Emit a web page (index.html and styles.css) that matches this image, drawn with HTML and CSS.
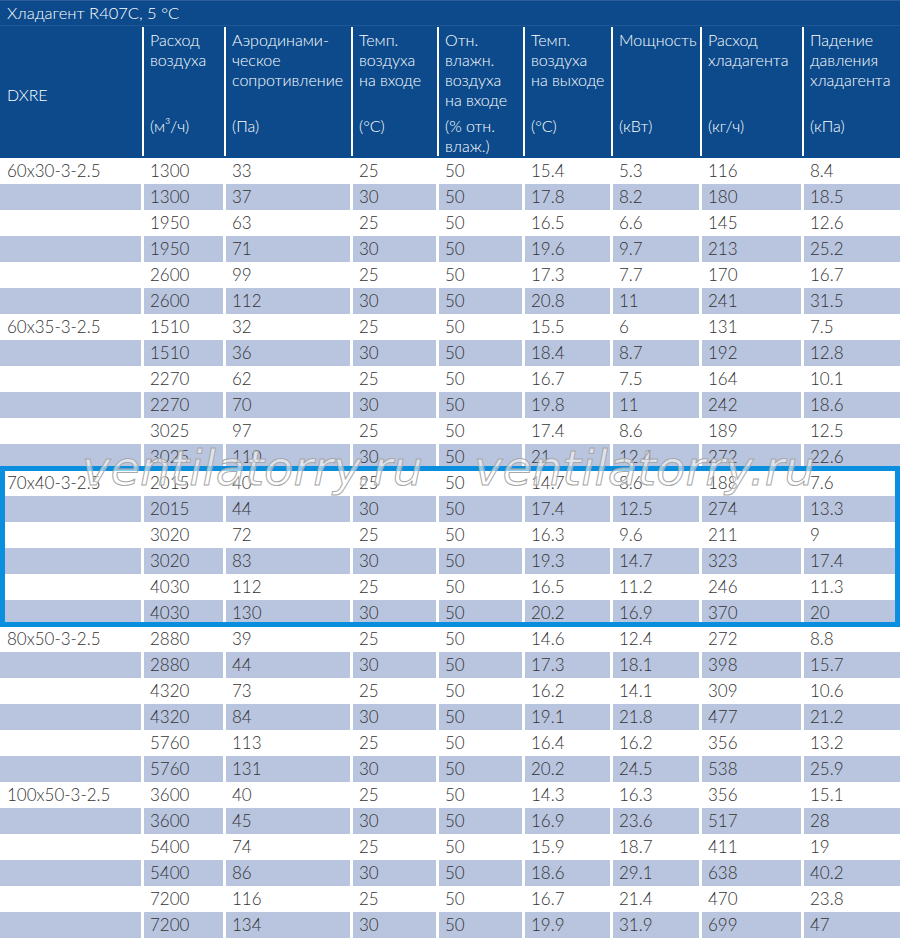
FILE: index.html
```html
<!DOCTYPE html>
<html lang="ru">
<head>
<meta charset="utf-8">
<title>DXRE R407C</title>
<link rel="stylesheet" href="styles.css">
</head>
<body>
<div class="sheet">
  <div class="title">Хладагент R407C, 5 °C</div>
  <div class="head">
    <div class="hc hc-first"><div class="model-label">DXRE</div></div>
    <div class="hc"><div class="name">Расход<br>воздуха</div><div class="unit">(м³/ч)</div></div>
    <div class="hc"><div class="name">Аэродинами-<br>ческое<br>сопротивление</div><div class="unit">(Па)</div></div>
    <div class="hc"><div class="name">Темп.<br>воздуха<br>на входе</div><div class="unit">(°C)</div></div>
    <div class="hc"><div class="name">Отн.<br>влажн.<br>воздуха<br>на входе</div><div class="unit">(% отн.<br>влаж.)</div></div>
    <div class="hc"><div class="name">Темп.<br>воздуха<br>на выходе</div><div class="unit">(°C)</div></div>
    <div class="hc"><div class="name">Мощность</div><div class="unit">(кВт)</div></div>
    <div class="hc"><div class="name">Расход<br>хладагента</div><div class="unit">(кг/ч)</div></div>
    <div class="hc"><div class="name">Падение<br>давления<br>хладагента</div><div class="unit">(кПа)</div></div>
  </div>
  <div class="body">
    <div class="row"><span>60x30-3-2.5</span><span>1300</span><span>33</span><span>25</span><span>50</span><span>15.4</span><span>5.3</span><span>116</span><span>8.4</span></div>
    <div class="row alt"><span></span><span>1300</span><span>37</span><span>30</span><span>50</span><span>17.8</span><span>8.2</span><span>180</span><span>18.5</span></div>
    <div class="row"><span></span><span>1950</span><span>63</span><span>25</span><span>50</span><span>16.5</span><span>6.6</span><span>145</span><span>12.6</span></div>
    <div class="row alt"><span></span><span>1950</span><span>71</span><span>30</span><span>50</span><span>19.6</span><span>9.7</span><span>213</span><span>25.2</span></div>
    <div class="row"><span></span><span>2600</span><span>99</span><span>25</span><span>50</span><span>17.3</span><span>7.7</span><span>170</span><span>16.7</span></div>
    <div class="row alt"><span></span><span>2600</span><span>112</span><span>30</span><span>50</span><span>20.8</span><span>11</span><span>241</span><span>31.5</span></div>

    <div class="row"><span>60x35-3-2.5</span><span>1510</span><span>32</span><span>25</span><span>50</span><span>15.5</span><span>6</span><span>131</span><span>7.5</span></div>
    <div class="row alt"><span></span><span>1510</span><span>36</span><span>30</span><span>50</span><span>18.4</span><span>8.7</span><span>192</span><span>12.8</span></div>
    <div class="row"><span></span><span>2270</span><span>62</span><span>25</span><span>50</span><span>16.7</span><span>7.5</span><span>164</span><span>10.1</span></div>
    <div class="row alt"><span></span><span>2270</span><span>70</span><span>30</span><span>50</span><span>19.8</span><span>11</span><span>242</span><span>18.6</span></div>
    <div class="row"><span></span><span>3025</span><span>97</span><span>25</span><span>50</span><span>17.4</span><span>8.6</span><span>189</span><span>12.5</span></div>
    <div class="row alt"><span></span><span>3025</span><span>110</span><span>30</span><span>50</span><span>21</span><span>12.4</span><span>272</span><span>22.6</span></div>

    <div class="row"><span>70x40-3-2.5</span><span>2015</span><span>40</span><span>25</span><span>50</span><span>14.7</span><span>8.6</span><span>188</span><span>7.6</span></div>
    <div class="row alt"><span></span><span>2015</span><span>44</span><span>30</span><span>50</span><span>17.4</span><span>12.5</span><span>274</span><span>13.3</span></div>
    <div class="row"><span></span><span>3020</span><span>72</span><span>25</span><span>50</span><span>16.3</span><span>9.6</span><span>211</span><span>9</span></div>
    <div class="row alt"><span></span><span>3020</span><span>83</span><span>30</span><span>50</span><span>19.3</span><span>14.7</span><span>323</span><span>17.4</span></div>
    <div class="row"><span></span><span>4030</span><span>112</span><span>25</span><span>50</span><span>16.5</span><span>11.2</span><span>246</span><span>11.3</span></div>
    <div class="row alt"><span></span><span>4030</span><span>130</span><span>30</span><span>50</span><span>20.2</span><span>16.9</span><span>370</span><span>20</span></div>

    <div class="row"><span>80x50-3-2.5</span><span>2880</span><span>39</span><span>25</span><span>50</span><span>14.6</span><span>12.4</span><span>272</span><span>8.8</span></div>
    <div class="row alt"><span></span><span>2880</span><span>44</span><span>30</span><span>50</span><span>17.3</span><span>18.1</span><span>398</span><span>15.7</span></div>
    <div class="row"><span></span><span>4320</span><span>73</span><span>25</span><span>50</span><span>16.2</span><span>14.1</span><span>309</span><span>10.6</span></div>
    <div class="row alt"><span></span><span>4320</span><span>84</span><span>30</span><span>50</span><span>19.1</span><span>21.8</span><span>477</span><span>21.2</span></div>
    <div class="row"><span></span><span>5760</span><span>113</span><span>25</span><span>50</span><span>16.4</span><span>16.2</span><span>356</span><span>13.2</span></div>
    <div class="row alt"><span></span><span>5760</span><span>131</span><span>30</span><span>50</span><span>20.2</span><span>24.5</span><span>538</span><span>25.9</span></div>

    <div class="row"><span>100x50-3-2.5</span><span>3600</span><span>40</span><span>25</span><span>50</span><span>14.3</span><span>16.3</span><span>356</span><span>15.1</span></div>
    <div class="row alt"><span></span><span>3600</span><span>45</span><span>30</span><span>50</span><span>16.9</span><span>23.6</span><span>517</span><span>28</span></div>
    <div class="row"><span></span><span>5400</span><span>74</span><span>25</span><span>50</span><span>15.9</span><span>18.7</span><span>411</span><span>19</span></div>
    <div class="row alt"><span></span><span>5400</span><span>86</span><span>30</span><span>50</span><span>18.6</span><span>29.1</span><span>638</span><span>40.2</span></div>
    <div class="row"><span></span><span>7200</span><span>116</span><span>25</span><span>50</span><span>16.7</span><span>21.4</span><span>470</span><span>23.8</span></div>
    <div class="row alt"><span></span><span>7200</span><span>134</span><span>30</span><span>50</span><span>19.9</span><span>31.9</span><span>699</span><span>47</span></div>
  </div>
  <div class="highlight"></div>
  <div class="wm wm-1">ventilatorry.ru</div>
  <div class="wm wm-2">ventilatorry.ru</div>
</div>
</body>
</html>
```
FILE: styles.css
```css
html, body {
  margin: 0;
  padding: 0;
  background: #ffffff;
}

.sheet {
  position: relative;
  width: 900px;
  font-family: "Lato", "Open Sans", "Noto Sans", sans-serif;
  font-size: 17px;
  font-weight: 300;
  color: #333333;
}

.title {
  height: 26px;
  box-sizing: border-box;
  line-height: 25px;
  padding-left: 7px;
  font-size: 16.5px;
  font-weight: 300;
  background: #0c4a8b;
  border-top: 1px solid #2a5f9c;
  border-bottom: 1px solid #1d5895;
  color: #ffffff;
}

.head {
  display: grid;
  grid-template-columns: 142px 82px 127px 86px 86px 88px 89px 102px 98px;
  height: 132px;
  box-sizing: border-box;
  padding: 1px 0 5px;
  background: #0c4a8b;
  color: #ffffff;
  font-size: 16px;
  font-weight: 300;
}

.hc {
  box-sizing: border-box;
  border-left: 2px solid #ffffff;
  padding: 3px 0 0 6px;
  line-height: 20px;
  white-space: nowrap;
}

.hc-first {
  border-left: 0;
  padding-left: 7px;
}

.model-label {
  padding-top: 55px;
}

.name {
  height: 86px;
}

.body {
  display: flex;
  flex-direction: column;
}

.row {
  display: grid;
  grid-template-columns: 141px 79px 124px 83px 83px 85px 86px 99px 96px;
  column-gap: 3px;
  height: 26px;
  line-height: 26px;
}

.row span {
  padding-left: 6px;
  white-space: nowrap;
}

.row span:first-child {
  padding-left: 7px;
}

.row.alt span {
  background: #b9c5df;
}

.highlight {
  position: absolute;
  left: 0;
  top: 466px;
  width: 900px;
  height: 161px;
  box-sizing: border-box;
  border: 5px solid #0a8fde;
}

.wm {
  position: absolute;
  top: 436px;
  font-family: "DejaVu Sans", sans-serif;
  font-style: oblique;
  font-size: 48px;
  line-height: 64px;
  color: rgba(255, 255, 255, 0.55);
  -webkit-text-stroke: 1px #a8a8a8;
  white-space: nowrap;
}

.wm-1 {
  left: 82px;
}

.wm-2 {
  left: 474px;
}
```
